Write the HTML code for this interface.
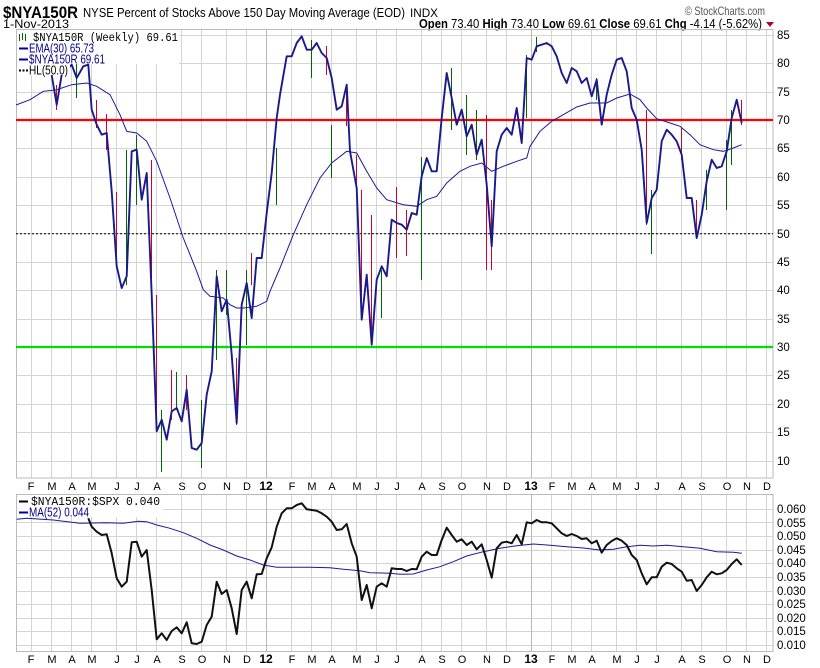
<!DOCTYPE html>
<html><head><meta charset="utf-8"><style>
html,body{margin:0;padding:0;background:#fff;width:820px;height:668px;overflow:hidden}
svg{display:block}
text{font-family:"Liberation Sans",Arial,sans-serif}
</style></head><body>
<svg width="820" height="668" viewBox="0 0 820 668" xmlns="http://www.w3.org/2000/svg">
<rect width="820" height="668" fill="#fff"/>
<text x="3" y="18" font-size="17" font-weight="bold" fill="#000" textLength="75" lengthAdjust="spacingAndGlyphs">$NYA150R</text>
<text x="83" y="17" font-size="13" fill="#000" textLength="322" lengthAdjust="spacingAndGlyphs">NYSE Percent of Stocks Above 150 Day Moving Average (EOD)</text>
<text x="410" y="17" font-size="12" fill="#000" textLength="28" lengthAdjust="spacingAndGlyphs">INDX</text>
<text x="3" y="28" font-size="12" fill="#000" textLength="66" lengthAdjust="spacingAndGlyphs">1-Nov-2013</text>
<text x="685" y="15" font-size="12" fill="#555" textLength="80" lengthAdjust="spacingAndGlyphs">© StockCharts.com</text>
<text x="419" y="28" font-size="13" fill="#000" textLength="343" lengthAdjust="spacingAndGlyphs"><tspan font-weight="bold">Open</tspan> 73.40 <tspan font-weight="bold">High</tspan> 73.40 <tspan font-weight="bold">Low</tspan> 69.61 <tspan font-weight="bold">Close</tspan> 69.61 <tspan font-weight="bold">Chg</tspan> -4.14 (-5.62%)</text>
<polygon points="766,22 774,22 770,27" fill="#b00030"/>

<g stroke="#d4d4d4" stroke-width="1">
<path d="M16 35.5H773M16 63.5H773M16 92.5H773M16 120.5H773M16 148.5H773M16 177.5H773M16 205.5H773M16 233.5H773M16 262.5H773M16 290.5H773M16 319.5H773M16 347.5H773M16 375.5H773M16 404.5H773M16 432.5H773M16 461.5H773"/>
<path d="M31.5 29V478M51.5 29V478M71.5 29V478M91.5 29V478M116.5 29V478M136.5 29V478M156.5 29V478M181.5 29V478M201.5 29V478M226.5 29V478M246.5 29V478M291.5 29V478M311.5 29V478M331.5 29V478M356.5 29V478M376.5 29V478M396.5 29V478M421.5 29V478M441.5 29V478M461.5 29V478M486.5 29V478M506.5 29V478M551.5 29V478M571.5 29V478M591.5 29V478M616.5 29V478M636.5 29V478M656.5 29V478M681.5 29V478M701.5 29V478M726.5 29V478M746.5 29V478M766.5 29V478"/>
</g>
<path d="M266.5 29V478M531.5 29V478" stroke="#b8b8b8"/>
<rect x="16.5" y="29.5" width="756.5" height="448.5" fill="none" stroke="#bbb"/>

<path d="M16 233.8H773" stroke="#000" stroke-dasharray="2,2" stroke-width="1"/>
<path d="M16 120H773" stroke="#ff0000" stroke-width="2.2"/>
<path d="M16 347H773" stroke="#00e000" stroke-width="2.2"/>

<polyline fill="none" stroke="#1a1a9a" stroke-width="1" points="16,105 30,99.7 43.3,91.3 56.7,89.7 71.7,84.7 86.7,83 96.7,86.3 110,94.7 120,114.7 126.7,131.3 136.7,133 146.7,141.3 156.7,161.3 170,198 183.3,238 196.7,271.3 203.3,289.7 210,296.3 223.3,298 230,304.7 236.7,308 243.3,308 256.7,306.3 266.7,301.3 270,291.3 280,268 293.3,234.7 306.7,204.7 320,178 331.7,163 346.7,151.3 356.7,153 366.7,171.3 376.7,188 386.7,199.7 403.3,204.7 416.7,206.3 426.7,199.7 436.7,196.3 446.7,183 460,171.3 470,166.3 481.7,163 491.7,171.3 503.3,166.3 516.7,161.3 526.7,158 530,146.3 540,131.3 551.7,121.3 563.3,114.7 576.7,107 590,103 606.7,103 616.7,98 630,94 640,99.7 646.7,108 656.7,118.7 670,123 680,126.3 690,134.7 700,144.7 713.3,149.7 723.3,151.3 733.3,148 741.7,144.7"/>

<g stroke-width="1">
<path stroke="#cc0033" d="M56.5 85V110M96.5 100V128M106.5 114V150M116.5 192V268M151.5 160V300M156.5 295V432M171.5 370V420M186.5 375V410M236.5 358V425M251.5 253V285M326.5 46V75M346.5 90V126M356.5 155V190M361.5 190V320M371.5 215V345M396.5 187V258M406.5 210V256M486.5 115V270M491.5 200V270M646.5 110V225M681.5 128V160M696.5 200V238M741.5 100V125"/>
<path stroke="#006600" d="M76.5 62V98M126.5 150V285M136.5 135V205M161.5 410V472M176.5 372V410M201.5 400V468M216.5 270V360M226.5 270V315M246.5 270V345M276.5 148V205M311.5 40V78M331.5 125V178M381.5 270V318M421.5 157V280M451.5 68V130M466.5 95V155M476.5 110V160M526.5 55V118M536.5 37V52M596.5 78V100M651.5 190V254M706.5 170V210M726.5 140V210M731.5 110V165"/>
</g>

<polyline fill="none" stroke="#1a1a8c" stroke-width="1.9" stroke-linejoin="round" points="50,65 56.7,104.7 61.7,74.7 71.7,64.7 76.7,78 83.3,66.3 88.3,64.7 91.7,109.7 96.7,124.7 101.7,134.7 106.7,133 111.7,191.3 116.7,266.3 121.7,288 126.7,276.3 131.7,151.3 136.7,149.7 141.7,199.7 146.7,173 151.7,294.7 156.7,431.3 161.7,419.7 166.7,439.7 171.7,411.3 176.7,408 181.7,421.3 186.7,389.7 191.7,448 196.7,449.7 201.7,443 206.7,394.7 211.7,371.3 216.7,276.3 221.7,311.3 226.7,299.7 231.7,354.7 236.7,423 241.7,304.7 246.7,283 251.7,318 256.7,258 261.7,258 266.7,213 271.7,173 276.7,118 280,94.7 286.7,56.3 291.7,56.3 296.7,43 301.7,36.3 306.7,49.7 311.7,49.7 316.7,43 321.7,53 326.7,58 331.7,78 336.7,109.7 341.7,106.3 346.7,84.7 350,151.3 356.7,188 361.7,319.7 366.7,274.7 371.7,344.7 376.7,279.7 381.7,266.3 386.7,276.3 391.7,219.7 396.7,223 401.7,224.7 406.7,229.7 411.7,213 416.7,214.7 421.7,176.3 426.7,158 431.7,171.3 436.7,171.3 441.7,118 446.7,73 451.7,98 456.7,124.7 461.7,109.7 466.7,136.3 471.7,124.7 476.7,154.7 481.7,139.7 486.7,184.7 491.7,246.3 496.7,151.3 501.7,134.7 506.7,128 511.7,134.7 516.7,108 521.7,143 526.7,58 531.7,59.7 536.7,46.3 546.7,43 551.7,46.3 556.7,56.3 561.7,73 566.7,83 571.7,68 576.7,71.3 581.7,83 586.7,78 591.7,96.3 596.7,79.7 601.7,124.7 606.7,94.7 611.7,74.7 616.7,59.7 621.7,58 626.7,71.3 631.7,108 636.7,119.7 641.7,149.7 646.7,223 651.7,198 656.7,189.7 661.7,141.3 666.7,129.7 671.7,134.7 676.7,141.3 681.7,154.7 686.7,198 691.7,198 696.7,238 701.7,214.7 706.7,181.3 711.7,159.7 716.7,168 721.7,166.3 726.7,151.3 731.7,118 736.7,99.7 741.7,123"/>

<rect x="17" y="30" width="162" height="34" fill="#fff"/>
<rect x="17" y="64" width="53" height="11" fill="#fff"/>
<path d="M19.5 34V41M22.5 33V40M25.5 34V41" stroke="#006600"/>
<text x="33" y="41" font-size="12" fill="#000" style="font-family:'Liberation Mono',monospace" textLength="145" lengthAdjust="spacingAndGlyphs">$NYA150R (Weekly) 69.61</text>
<path d="M19 48.5H28" stroke="#00008b" stroke-width="2"/>
<text x="29" y="52.5" font-size="13" fill="#00008b" textLength="65" lengthAdjust="spacingAndGlyphs">EMA(30) 65.73</text>
<path d="M19 59.5H28" stroke="#00008b" stroke-width="2"/>
<text x="29" y="63.5" font-size="13" fill="#00008b" textLength="76" lengthAdjust="spacingAndGlyphs">$NYA150R  69.61</text>
<path d="M19 70.5H28" stroke="#000" stroke-width="2" stroke-dasharray="2,1.5"/>
<text x="29" y="74.5" font-size="13" fill="#000" textLength="39" lengthAdjust="spacingAndGlyphs">HL(50.0)</text>

<g font-size="11.5" fill="#000">
<text x="777" y="39">85</text><text x="777" y="67">80</text><text x="777" y="96">75</text><text x="777" y="124">70</text><text x="777" y="152">65</text><text x="777" y="181">60</text><text x="777" y="209">55</text><text x="777" y="238">50</text><text x="777" y="266">45</text><text x="777" y="294">40</text><text x="777" y="323">35</text><text x="777" y="351">30</text><text x="777" y="379">25</text><text x="777" y="408">20</text><text x="777" y="436">15</text><text x="777" y="465">10</text>
</g>

<g font-size="11" fill="#000" text-anchor="middle">
<g id="m1">
<text x="31" y="490">F</text><text x="52" y="490">M</text><text x="72" y="490">A</text><text x="92" y="490">M</text><text x="117" y="490">J</text><text x="137" y="490">J</text><text x="157" y="490">A</text><text x="182" y="490">S</text><text x="202" y="490">O</text><text x="227" y="490">N</text><text x="247" y="490">D</text><text x="266" y="490" font-weight="bold" font-size="12">12</text><text x="292" y="490">F</text><text x="312" y="490">M</text><text x="332" y="490">A</text><text x="357" y="490">M</text><text x="377" y="490">J</text><text x="397" y="490">J</text><text x="422" y="490">A</text><text x="442" y="490">S</text><text x="462" y="490">O</text><text x="487" y="490">N</text><text x="507" y="490">D</text><text x="531" y="490" font-weight="bold" font-size="12">13</text><text x="552" y="490">F</text><text x="572" y="490">M</text><text x="592" y="490">A</text><text x="617" y="490">M</text><text x="637" y="490">J</text><text x="657" y="490">J</text><text x="682" y="490">A</text><text x="702" y="490">S</text><text x="727" y="490">O</text><text x="747" y="490">N</text><text x="767" y="490">D</text>
</g>
<use href="#m1" y="173"/>
</g>

<g stroke="#d4d4d4" stroke-width="1">
<path d="M16 509.5H773M16 522.5H773M16 536.5H773M16 550.5H773M16 563.5H773M16 577.5H773M16 591.5H773M16 604.5H773M16 618.5H773M16 631.5H773M16 645.5H773"/>
<path d="M31.5 495V651M51.5 495V651M71.5 495V651M91.5 495V651M116.5 495V651M136.5 495V651M156.5 495V651M181.5 495V651M201.5 495V651M226.5 495V651M246.5 495V651M291.5 495V651M311.5 495V651M331.5 495V651M356.5 495V651M376.5 495V651M396.5 495V651M421.5 495V651M441.5 495V651M461.5 495V651M486.5 495V651M506.5 495V651M551.5 495V651M571.5 495V651M591.5 495V651M616.5 495V651M636.5 495V651M656.5 495V651M681.5 495V651M701.5 495V651M726.5 495V651M746.5 495V651M766.5 495V651"/>
</g>
<path d="M266.5 495V651M531.5 495V651" stroke="#b8b8b8"/>
<rect x="16.5" y="494.5" width="756.5" height="157" fill="none" stroke="#bbb"/>

<polyline fill="none" stroke="#1a1a9a" stroke-width="1" points="16.7,519.3 26.7,518.3 53.3,520 80,523.3 106.7,522.7 123.3,523.3 138.3,521.3 146.7,521.7 156.7,525 170,528.3 183.3,532.7 196.7,538.3 210,545 223.3,550 236.7,556 250,560 263.3,565 276.7,567.3 310,567.3 330,567.7 343.3,569.3 360,570.7 370,572.7 390,573.3 400,574.3 413.3,574 426.7,570 440,566.7 453.3,561.7 466.7,556 483.3,551.7 500,548.3 516.7,545.7 533.3,544 550,545.3 566.7,546.7 583.3,548 600,550 613.3,549.3 626.7,546.7 640,545.3 653.3,546 666.7,545.3 683.3,546.7 700,548.3 716.7,551.7 733.3,552.3 741.7,553.3"/>
<polyline fill="none" stroke="#111" stroke-width="2" stroke-linejoin="round" points="88.3,518.3 91.7,526.7 96.7,531.7 101.7,535 106.7,534.3 111.7,553.3 116.7,578.3 121.7,586.7 126.7,581.7 131.7,542.3 136.7,541.7 141.7,556.7 146.7,550 151.7,590 156.7,639.3 161.7,633.3 166.7,640 171.7,631 176.7,627.3 181.7,633.3 186.7,622.3 191.7,643.3 196.7,644 201.7,641.7 206.7,625 211.7,616.7 216.7,581.7 221.7,594 226.7,590 231.7,608.3 236.7,634 241.7,590 246.7,581.7 251.7,598.3 256.7,574.3 261.7,574 266.7,558.3 271.7,547.3 276.7,526.7 281.7,513.3 286.7,508.3 291.7,508.3 296.7,505 301.7,503.3 306.7,509.3 311.7,510 316.7,510.7 321.7,513.3 326.7,516.7 331.7,521.7 336.7,530 341.7,529.3 346.7,524 351.7,543.3 356.7,556.7 361.7,600 366.7,585 371.7,608.3 376.7,586.7 381.7,583.3 386.7,586.7 391.7,568.3 396.7,569 401.7,569 406.7,571 411.7,569 416.7,569.3 421.7,556.7 426.7,551.7 431.7,555 436.7,555 441.7,540 446.7,527.7 451.7,535 456.7,541.7 461.7,539.3 466.7,545 471.7,541.7 476.7,549.3 481.7,544.3 486.7,560 491.7,577.7 496.7,548.3 501.7,542.7 506.7,541.7 511.7,543.3 516.7,535 521.7,544.3 526.7,522.3 531.7,523.3 536.7,520 541.7,522.3 546.7,522.3 551.7,523.3 556.7,528.3 561.7,533.3 566.7,536 571.7,534 576.7,536 581.7,539 586.7,538.3 591.7,543.3 596.7,540.7 601.7,552.7 606.7,545 611.7,541 616.7,538.3 621.7,540.7 626.7,545 631.7,555 636.7,560 641.7,573.3 646.7,584.3 651.7,577.3 656.7,577.3 661.7,566.7 666.7,562.7 671.7,564 676.7,568.3 681.7,571.7 686.7,580.7 691.7,580 696.7,591 701.7,585 706.7,577.3 711.7,571.7 716.7,574.3 721.7,573.3 726.7,570 731.7,564 736.7,559.3 741.7,565"/>

<rect x="17" y="495" width="146" height="22" fill="#fff"/>
<path d="M19 501.5H28" stroke="#000" stroke-width="2"/>
<text x="31" y="505" font-size="12" fill="#000" style="font-family:'Liberation Mono',monospace" textLength="129" lengthAdjust="spacingAndGlyphs">$NYA150R:$SPX 0.040</text>
<path d="M19 512.5H28" stroke="#00008b" stroke-width="2"/>
<text x="29" y="516.5" font-size="13" fill="#00008b" textLength="60" lengthAdjust="spacingAndGlyphs">MA(52) 0.044</text>

<g font-size="11.5" fill="#000">
<text x="777" y="513">0.060</text><text x="777" y="527">0.055</text><text x="777" y="540">0.050</text><text x="777" y="554">0.045</text><text x="777" y="567">0.040</text><text x="777" y="581">0.035</text><text x="777" y="595">0.030</text><text x="777" y="608">0.025</text><text x="777" y="622">0.020</text><text x="777" y="635">0.015</text><text x="777" y="649">0.010</text>
</g>
</svg>
</body></html>
